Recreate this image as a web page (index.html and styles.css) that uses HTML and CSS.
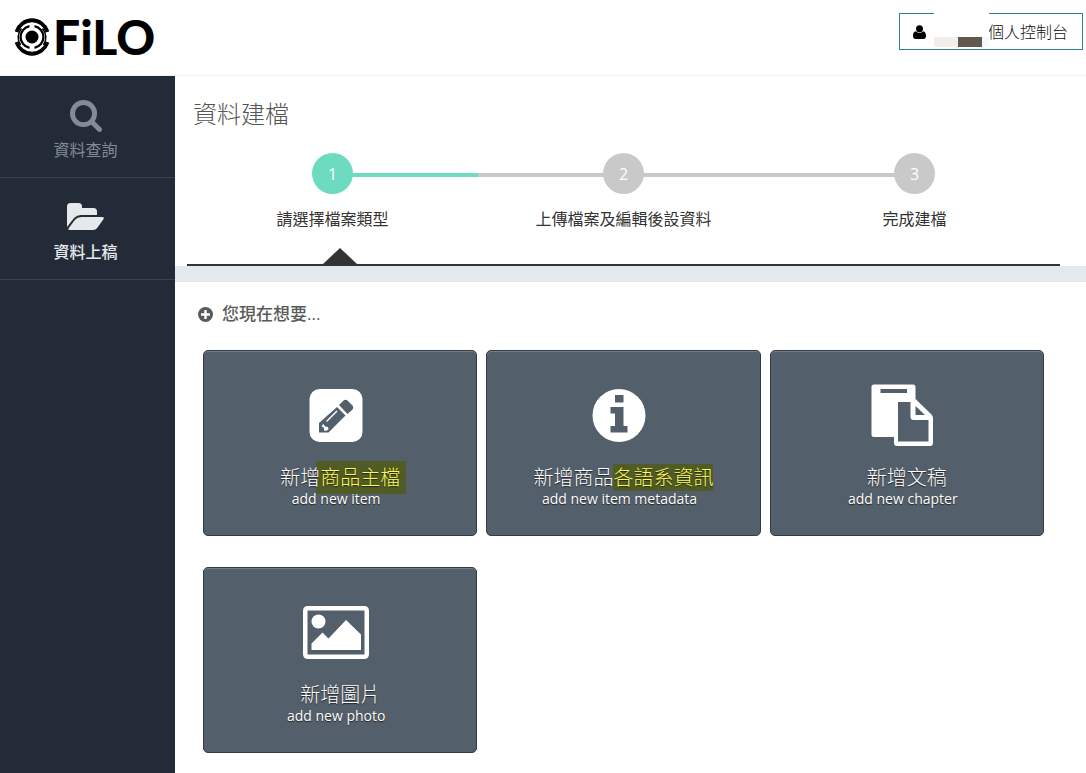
FILE: index.html
```html
<!DOCTYPE html>
<html lang="zh-Hant">
<head>
<meta charset="utf-8">
<meta name="viewport" content="width=device-width, initial-scale=1">
<title>FiLO 資料建檔</title>
<link rel="stylesheet" href="styles.css">
</head>
<body>
<header class="topbar">
  <a class="logo" href="#">
    <svg class="logo-mark" viewBox="0 0 34 38" aria-hidden="true">
      <circle cx="17" cy="19" r="6.500"/>
      <g fill="none" stroke="#000">
        <path stroke-width="3.800" d="M1.500 14A16.300 17 0 0 1 32.500 14M1.500 24A16.300 17 0 0 0 32.500 24"/>
        <path stroke-width="2.200" d="M14.500 8.200A11 11 0 0 0 14.500 29.800M19.500 8.200A11 11 0 0 1 19.500 29.800"/>
        <path stroke-width="1.600" d="M6.500 10.500A13.800 13.800 0 0 0 5.500 27M27.500 10.500A13.800 13.800 0 0 1 28.500 27"/>
      </g>
    </svg>
    <span class="logo-text">FiLO</span>
  </a>
  <button class="account" type="button">
    <svg class="account-icon" viewBox="0 0 13 14" aria-hidden="true"><circle cx="6.500" cy="3.700" r="3.500"/><path d="M3 6.200C.8 6.500 0 8.300 0 11c0 2 1 3 2.700 3h7.600c1.700 0 2.700-1 2.700-3 0-2.700-.8-4.500-3-4.800-1.900 2.100-5.100 2.100-7 0z"/></svg>
    <span class="redacted"><i class="tone-a"></i><i class="tone-b"></i><i class="tone-c"></i></span>
    <span>個人控制台</span>
  </button>
</header>
<div class="layout">
  <nav class="sidebar">
    <a class="nav-item" href="#">
      <svg class="nav-icon" viewBox="64 128 1664 1664" aria-hidden="true"><path d="M1216 832q0-185-131.500-316.500t-316.500-131.500-316.500 131.500-131.500 316.500 131.500 316.500 316.500 131.500 316.500-131.500 131.500-316.500zm512 832q0 52-38 90t-90 38q-54 0-90-38l-343-342q-179 124-399 124-143 0-273.500-55.500t-225-150-150-225-55.500-273.500 55.500-273.500 150-225 225-150 273.500-55.500 273.500 55.500 225 150 150 225 55.500 273.500q0 220-124 399l343 343q37 37 37 90z"/></svg>
      <span>資料查詢</span>
    </a>
    <a class="nav-item active" href="#">
      <svg class="nav-icon wide" viewBox="0 2 37 32" aria-hidden="true"><path d="M0 27V6.500Q0 3 3.500 3h8Q15 3 15 6.500V8h11.500Q30 8 30 11.500V15H14q-4 0-7 3z"/><path d="M14.500 17H35q3 0 1.200 2.500l-6 8.500q-1.400 2-4.200 2H3Q.500 30 2 27.800l6-8Q10.500 17 14.500 17z"/></svg>
      <span>資料上稿</span>
    </a>
  </nav>
  <main class="content">
    <section class="wizard">
      <h1>資料建檔</h1>
      <ol class="steps">
        <li class="step current"><span class="dot">1</span><span>請選擇檔案類型</span></li>
        <li class="step"><span class="dot">2</span><span>上傳檔案及編輯後設資料</span></li>
        <li class="step"><span class="dot">3</span><span>完成建檔</span></li>
      </ol>
      <div class="pointer"></div>
    </section>
    <section class="choices">
      <h2>
        <svg class="plus" viewBox="0 0 15 15" aria-hidden="true"><circle cx="7.500" cy="7.500" r="7.500"/><path d="M7.500 3v9M3 7.500h9" stroke="#fff" stroke-width="2.400"/></svg>
        <span>您現在想要...</span>
      </h2>
      <div class="cards">
        <button class="card" type="button">
          <svg class="card-icon" viewBox="0 0 66 66" aria-hidden="true"><rect x="6.500" y="7" width="53" height="53" rx="10"/><g fill="#535f6a"><path d="M34 25 42.500 33.500 25.500 50.500H16V41z"/><path d="M36 23l4-4q2.500-2.500 5 0l4 4q2.500 2.500 0 5l-4.500 4z"/></g><path d="M18.500 44l2-2 1.500 2.500 3 .5.500 2.500-2.500 1.500-2-.500V46z"/><path d="M23.500 39.500 34 29" fill="none" stroke="#fff" stroke-width="1.500"/></svg>
          <span class="card-title">新增<mark class="tall">商品主檔</mark></span>
          <span class="card-sub">add new item</span>
        </button>
        <button class="card" type="button">
          <svg class="card-icon" viewBox="0 0 66 66" aria-hidden="true"><circle cx="33" cy="33.500" r="26.500"/><path fill="#535f6a" d="M29 13h8.500v7.500H29zM24.500 25h13v19h4v6.500h-17V44H29V31.500h-4.500z"/></svg>
          <span class="card-title">新增商品<mark>各語系資訊</mark></span>
          <span class="card-sub">add new item metadata</span>
        </button>
        <button class="card" type="button">
          <svg class="card-icon" viewBox="0 0 66 66" aria-hidden="true"><path fill-rule="evenodd" d="M4 2.500h39q2.500 0 2.500 2.500V17l16 15.500q1.500 1.500 1.500 4V61q0 3-3 3H27q-3 0-3-3v-6H4q-2.500 0-2.500-2.500V5Q1.500 2.500 4 2.500zM10.500 7v4H37V7zM28 20v39.500h30.500V38H43.500q-3 0-3-3V20zM45.500 24v9h9.500z"/></svg>
          <span class="card-title">新增文稿</span>
          <span class="card-sub">add new chapter</span>
        </button>
        <button class="card" type="button">
          <svg class="card-icon" viewBox="0 0 66 66" aria-hidden="true"><path fill-rule="evenodd" d="M5 7h56q5 0 5 5v43q0 5-5 5H5q-5 0-5-5V12q0-5 5-5zM4.500 11.500v44h57v-44z"/><circle cx="15.500" cy="22.500" r="7"/><path d="M8.500 51V44.500l11-11 6 6L43 21l15 14.500V51z"/></svg>
          <span class="card-title">新增圖片</span>
          <span class="card-sub">add new photo</span>
        </button>
      </div>
    </section>
  </main>
</div>
</body>
</html>
```
FILE: styles.css
```css
* { box-sizing: border-box; }
body {
  margin: 0;
  min-height: 100vh;
  display: flex;
  flex-direction: column;
  background: #fff;
  color: #333;
  font: 16px/24px "Open Sans", "Noto Sans CJK TC", sans-serif;
}
button { font: inherit; cursor: pointer; }
a { color: inherit; text-decoration: none; }
svg { display: block; fill: currentColor; }

.topbar {
  display: flex;
  justify-content: space-between;
  align-items: flex-start;
  height: 76px;
  padding: 13px 3px 0 15px;
  border-bottom: 1px solid #f1f1f1;
}
.logo { display: flex; align-items: center; gap: 4px; color: #000; }
.logo-mark { width: 34px; height: 38px; }
.logo-text { font: 900 48px/48px Lato, sans-serif; }
.account {
  position: relative;
  display: flex;
  align-items: center;
  gap: 62px;
  height: 37px;
  padding: 0 14px 0 13px;
  border: 1px solid #2b8489;
  background: #fff;
  color: #111;
  font-weight: 300;
}
.account-icon { width: 13px; height: 14px; color: #000; }
.redacted {
  position: absolute;
  left: 34px;
  top: -2px;
  width: 55px;
  height: 35px;
  display: flex;
  align-items: flex-end;
  background: #fff;
}
.redacted i { height: 10px; width: 24px; }
.redacted .tone-a { background: #f4eeeb; }
.redacted .tone-b { background: #62584f; }
.redacted .tone-c { background: #f5f9fb; width: 7px; }

.layout { display: flex; flex: 1; }
.sidebar { width: 175px; flex: none; background: #242b38; color: #858b94; }
.nav-item {
  display: flex;
  flex-direction: column;
  align-items: center;
  height: 102px;
  padding: 24px 4px 0 0;
  gap: 6px;
  border-bottom: 1px solid #3a4250;
}
.nav-item.active { color: #e5e9ec; font-weight: 500; }
.nav-icon { width: 32px; height: 32px; }
.nav-icon.wide { width: 37px; }

.content { flex: 1; min-width: 0; }
.wizard { padding: 20px 26px 0 12px; border-bottom: 16px solid #e5e9ec; }
h1 {
  margin: 0;
  padding-left: 6px;
  font-size: 24px;
  line-height: 36px;
  font-weight: 300;
  color: #555;
}
.steps {
  display: grid;
  grid-template-columns: repeat(3, 1fr);
  margin: 0;
  padding: 21px 0 0;
  list-style: none;
}
.step {
  position: relative;
  display: flex;
  flex-direction: column;
  align-items: center;
  gap: 13px;
}
.step::before {
  content: "";
  position: absolute;
  top: 20px;
  left: 0;
  width: 100%;
  height: 4px;
  background: #c9c9c9;
}
.step:first-child::before { left: 50%; width: 50%; background: #6cdbc0; }
.step:last-child::before { width: 50%; }
.dot {
  position: relative;
  width: 41px;
  height: 41px;
  border-radius: 50%;
  background: #c9c9c9;
  color: #fff;
  line-height: 42px;
  text-align: center;
}
.current .dot { background: #6cdbc0; }
.pointer { height: 35px; border-bottom: 2px solid #333; display: flex; align-items: flex-end; padding-left: 136px; }
.pointer::before {
  content: "";
  border: 17px solid transparent;
  border-top: 0;
  border-bottom: 16px solid #333;
}

.choices { padding: 20px 42px 20px 28px; }
h2 {
  display: flex;
  align-items: center;
  gap: 9px;
  margin: 0 0 24px -5px;
  font-size: 17px;
  line-height: 24px;
  font-weight: 500;
  color: #5a5a5a;
}
.plus { width: 15px; height: 15px; }
.cards { display: grid; grid-template-columns: repeat(3, 1fr); gap: 31px 9px; }
.card {
  isolation: isolate;
  display: flex;
  flex-direction: column;
  align-items: center;
  height: 186px;
  padding: 31px 0 0;
  border: 1px solid #333b43;
  border-radius: 5px;
  background: #535f6a;
  box-shadow: inset 0 1px 0 #73808c;
  color: #fff;
  text-shadow: 0 1px 1px #222;
}
.card-icon { width: 66px; height: 66px; margin-right: 8px; }
.card-title { margin-top: 16px; font-size: 20px; line-height: 28px; font-weight: 300; }
.card-sub { margin-right: 8px; font-size: 14px; line-height: 14px; }
mark { position: relative; z-index: -1; background: #505b26; color: #fdfd50; }
mark.tall { margin: 0 -6px 0 -4px; padding: 3px 6px 3px 4px; }
```
